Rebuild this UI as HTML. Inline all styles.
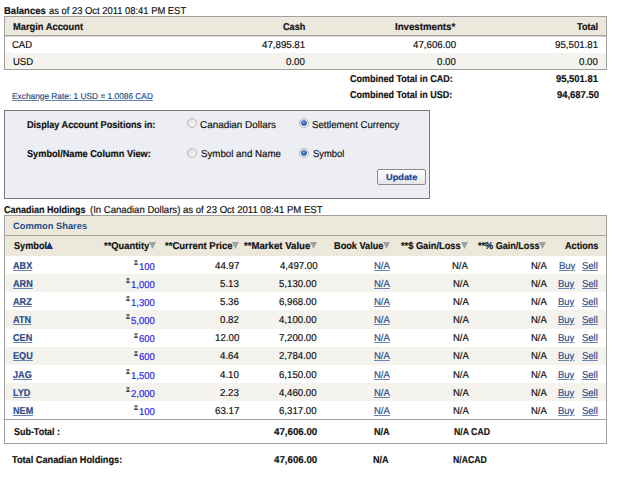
<!DOCTYPE html><html><head><meta charset="utf-8"><style>
html,body{margin:0;padding:0;background:#fff;}
body{width:619px;height:477px;position:relative;overflow:hidden;font-family:"Liberation Sans",sans-serif;font-size:10px;color:#111;text-rendering:geometricPrecision;}
.t{position:absolute;white-space:nowrap;line-height:11px;transform-origin:0 0;-webkit-text-stroke:0.18px currentColor;}
.u{text-decoration:underline;text-decoration-color:#6a84b0;}
.x{position:absolute;box-sizing:border-box;}
</style></head><body>
<div class="x" style="left:4px;top:16px;width:603px;height:19px;background:#ece9dc"></div>
<div class="x" style="left:4px;top:16px;width:603px;height:54px;border:1px solid #a0a0a0"></div>
<div class="x" style="left:5px;top:35px;width:601px;height:1px;background:#a4a49c"></div>
<div class="x" style="left:5px;top:36px;width:601px;height:1px;background:#d8d6cc"></div>
<div class="x" style="left:5px;top:53px;width:601px;height:16px;background:#f5f3ee"></div>
<div class="x" style="left:4px;top:110px;width:426px;height:89px;border:1px solid #7a7a7a;background:#eceef3"></div>
<svg width="0" height="0" style="position:absolute"><defs><linearGradient id="rg" x1="0" y1="0" x2="1" y2="1"><stop offset="0" stop-color="#d6d9de"/><stop offset="1" stop-color="#ffffff"/></linearGradient><radialGradient id="bg" cx="0.45" cy="0.4" r="0.6"><stop offset="0" stop-color="#7db4ec"/><stop offset="0.5" stop-color="#2f6cc0"/><stop offset="1" stop-color="#1c4690"/></radialGradient></defs></svg>
<svg class="x" style="left:187px;top:118px" width="10" height="10" viewBox="0 0 10 10"><circle cx="5" cy="5" r="4.5" fill="url(#rg)" stroke="#b4b4b4" stroke-width="1"/></svg>
<svg class="x" style="left:299px;top:118px" width="10" height="10" viewBox="0 0 10 10"><circle cx="5" cy="5" r="4.5" fill="url(#rg)" stroke="#b4b4b4" stroke-width="1"/><circle cx="5" cy="5" r="2.8" fill="url(#bg)"/></svg>
<svg class="x" style="left:187px;top:148px" width="10" height="10" viewBox="0 0 10 10"><circle cx="5" cy="5" r="4.5" fill="url(#rg)" stroke="#b4b4b4" stroke-width="1"/></svg>
<svg class="x" style="left:299px;top:148px" width="10" height="10" viewBox="0 0 10 10"><circle cx="5" cy="5" r="4.5" fill="url(#rg)" stroke="#b4b4b4" stroke-width="1"/><circle cx="5" cy="5" r="2.8" fill="url(#bg)"/></svg>
<div class="x" style="left:377px;top:169px;width:49px;height:16px;border:1px solid #8a8a8a;border-radius:2px;background:linear-gradient(#ffffff,#e6e6e6)"></div>
<div class="x" style="left:4px;top:215px;width:603px;height:41px;background:#ece9dc"></div>
<div class="x" style="left:4px;top:215px;width:603px;height:229px;border:1px solid #a0a0a0"></div>
<div class="x" style="left:5px;top:235px;width:601px;height:1px;background:#a8a8a0"></div>
<div class="x" style="left:5px;top:274px;width:601px;height:18px;background:#f5f3ee"></div>
<div class="x" style="left:5px;top:310px;width:601px;height:19px;background:#f5f3ee"></div>
<div class="x" style="left:5px;top:347px;width:601px;height:18px;background:#f5f3ee"></div>
<div class="x" style="left:5px;top:383px;width:601px;height:18px;background:#f5f3ee"></div>
<div class="x" style="left:5px;top:419px;width:601px;height:1px;background:#a0a0a0"></div>
<svg class="x" style="left:148.6px;top:242px" width="7" height="7" viewBox="0 0 7 7"><path d="M0 0H7L3.5 7Z" fill="#a0a0a0"/></svg>
<svg class="x" style="left:231.7px;top:242px" width="7" height="7" viewBox="0 0 7 7"><path d="M0 0H7L3.5 7Z" fill="#a0a0a0"/></svg>
<svg class="x" style="left:310px;top:242px" width="7" height="7" viewBox="0 0 7 7"><path d="M0 0H7L3.5 7Z" fill="#a0a0a0"/></svg>
<svg class="x" style="left:382.7px;top:242px" width="7" height="7" viewBox="0 0 7 7"><path d="M0 0H7L3.5 7Z" fill="#a0a0a0"/></svg>
<svg class="x" style="left:461.1px;top:242px" width="7" height="7" viewBox="0 0 7 7"><path d="M0 0H7L3.5 7Z" fill="#a0a0a0"/></svg>
<svg class="x" style="left:539.4px;top:242px" width="7" height="7" viewBox="0 0 7 7"><path d="M0 0H7L3.5 7Z" fill="#a0a0a0"/></svg>
<svg class="x" style="left:46px;top:242px" width="7" height="7" viewBox="0 0 7 7"><path d="M0 7H7L3.5 0Z" fill="#1c3a7e"/></svg>
<svg class="x" style="left:134.1px;top:260px" width="4" height="5" viewBox="0 0 4 5"><path d="M.4 .2H3.6V1.5H.4ZM.2 3.6H3.8V4.9H.2ZM1.55 1H2.45V4H1.55Z" fill="#444"/></svg>
<svg class="x" style="left:126.2px;top:278px" width="4" height="5" viewBox="0 0 4 5"><path d="M.4 .2H3.6V1.5H.4ZM.2 3.6H3.8V4.9H.2ZM1.55 1H2.45V4H1.55Z" fill="#444"/></svg>
<svg class="x" style="left:126.2px;top:296px" width="4" height="5" viewBox="0 0 4 5"><path d="M.4 .2H3.6V1.5H.4ZM.2 3.6H3.8V4.9H.2ZM1.55 1H2.45V4H1.55Z" fill="#444"/></svg>
<svg class="x" style="left:126.2px;top:314px" width="4" height="5" viewBox="0 0 4 5"><path d="M.4 .2H3.6V1.5H.4ZM.2 3.6H3.8V4.9H.2ZM1.55 1H2.45V4H1.55Z" fill="#444"/></svg>
<svg class="x" style="left:134.1px;top:333px" width="4" height="5" viewBox="0 0 4 5"><path d="M.4 .2H3.6V1.5H.4ZM.2 3.6H3.8V4.9H.2ZM1.55 1H2.45V4H1.55Z" fill="#444"/></svg>
<svg class="x" style="left:134.1px;top:351px" width="4" height="5" viewBox="0 0 4 5"><path d="M.4 .2H3.6V1.5H.4ZM.2 3.6H3.8V4.9H.2ZM1.55 1H2.45V4H1.55Z" fill="#444"/></svg>
<svg class="x" style="left:126.2px;top:369px" width="4" height="5" viewBox="0 0 4 5"><path d="M.4 .2H3.6V1.5H.4ZM.2 3.6H3.8V4.9H.2ZM1.55 1H2.45V4H1.55Z" fill="#444"/></svg>
<svg class="x" style="left:126.2px;top:387px" width="4" height="5" viewBox="0 0 4 5"><path d="M.4 .2H3.6V1.5H.4ZM.2 3.6H3.8V4.9H.2ZM1.55 1H2.45V4H1.55Z" fill="#444"/></svg>
<svg class="x" style="left:134.1px;top:405px" width="4" height="5" viewBox="0 0 4 5"><path d="M.4 .2H3.6V1.5H.4ZM.2 3.6H3.8V4.9H.2ZM1.55 1H2.45V4H1.55Z" fill="#444"/></svg>
<div class="t" style="left:4.25px;top:6px;transform:scaleX(0.9511);color:#111;font-weight:bold">Balances</div>
<div class="t" style="left:48.75px;top:6px;transform:scaleX(0.9391);color:#111">as of 23 Oct 2011 08:41 PM EST</div>
<div class="t" style="left:12.75px;top:22px;transform:scaleX(0.9312);color:#111;font-weight:bold">Margin Account</div>
<div class="t" style="left:283.25px;top:22px;transform:scaleX(0.91);color:#111;font-weight:bold">Cash</div>
<div class="t" style="left:395.25px;top:22px;transform:scaleX(0.9676);color:#111;font-weight:bold">Investments*</div>
<div class="t" style="left:577.25px;top:22px;transform:scaleX(0.91);color:#111;font-weight:bold">Total</div>
<div class="t" style="left:12.25px;top:40px;transform:scaleX(0.95);color:#111">CAD</div>
<div class="t" style="left:262.25px;top:40px;transform:scaleX(0.97);color:#111">47,895.81</div>
<div class="t" style="left:412.5px;top:40px;transform:scaleX(0.97);color:#111">47,606.00</div>
<div class="t" style="left:555.25px;top:40px;transform:scaleX(0.97);color:#111">95,501.81</div>
<div class="t" style="left:12.75px;top:57px;transform:scaleX(0.95);color:#111">USD</div>
<div class="t" style="left:286.25px;top:57px;transform:scaleX(0.97);color:#111">0.00</div>
<div class="t" style="left:436.5px;top:57px;transform:scaleX(0.97);color:#111">0.00</div>
<div class="t" style="left:579.25px;top:57px;transform:scaleX(0.97);color:#111">0.00</div>
<div class="t" style="left:350.0px;top:74px;transform:scaleX(0.8995);color:#111;font-weight:bold">Combined Total in CAD:</div>
<div class="t" style="left:556.0px;top:74px;transform:scaleX(0.9414);color:#111;font-weight:bold">95,501.81</div>
<div class="t" style="left:350.0px;top:90px;transform:scaleX(0.8995);color:#111;font-weight:bold">Combined Total in USD:</div>
<div class="t" style="left:556.5px;top:90px;transform:scaleX(0.9414);color:#111;font-weight:bold">94,687.50</div>
<div class="t u" style="left:12.25px;top:90.5px;transform:scaleX(0.9794);color:#2a4f86;font-size:8.5px">Exchange Rate: 1 USD = 1.0086 CAD</div>
<div class="t" style="left:27.0px;top:120px;transform:scaleX(0.9114);color:#111;font-weight:bold">Display Account Positions in:</div>
<div class="t" style="left:27.25px;top:149px;transform:scaleX(0.9175);color:#111;font-weight:bold">Symbol/Name Column View:</div>
<div class="t" style="left:200.0px;top:120px;transform:scaleX(0.9891);color:#111">Canadian Dollars</div>
<div class="t" style="left:312.25px;top:120px;transform:scaleX(0.9588);color:#111">Settlement Currency</div>
<div class="t" style="left:200.75px;top:149px;transform:scaleX(0.972);color:#111">Symbol and Name</div>
<div class="t" style="left:312.5px;top:149px;transform:scaleX(0.9385);color:#111">Symbol</div>
<div class="t" style="left:385.75px;top:171.5px;transform:scaleX(1.085);color:#1a3f8f;font-size:8.5px;font-weight:bold">Update</div>
<div class="t" style="left:4.25px;top:205px;transform:scaleX(0.9012);color:#111;font-weight:bold">Canadian Holdings</div>
<div class="t" style="left:90.0px;top:205px;transform:scaleX(0.9558);color:#111">(In Canadian Dollars) as of 23 Oct 2011 08:41 PM EST</div>
<div class="t" style="left:12.75px;top:220.5px;transform:scaleX(1.0149);color:#244c8a;font-size:9.2px;font-weight:bold;-webkit-text-stroke:0">Common Shares</div>
<div class="t" style="left:13.5px;top:241px;transform:scaleX(0.916);color:#111;font-weight:bold">Symbol</div>
<div class="t" style="left:103.5px;top:241px;transform:scaleX(0.935);color:#111;font-weight:bold">**Quantity</div>
<div class="t" style="left:164.5px;top:241px;transform:scaleX(0.9493);color:#111;font-weight:bold">**Current Price</div>
<div class="t" style="left:244.0px;top:241px;transform:scaleX(0.9621);color:#111;font-weight:bold">**Market Value</div>
<div class="t" style="left:333.5px;top:241px;transform:scaleX(0.9175);color:#111;font-weight:bold">Book Value</div>
<div class="t" style="left:401.0px;top:241px;transform:scaleX(0.9254);color:#111;font-weight:bold">**$ Gain/Loss</div>
<div class="t" style="left:477.75px;top:241px;transform:scaleX(0.9071);color:#111;font-weight:bold">**% Gain/Loss</div>
<div class="t" style="left:564.75px;top:241px;transform:scaleX(0.9104);color:#111;font-weight:bold">Actions</div>
<div class="t u" style="left:12.75px;top:261px;transform:scaleX(0.91);color:#2c4c88;font-weight:bold">ABX</div>
<div class="t" style="left:139.0px;top:262px;transform:scaleX(0.95);color:#2626e8">100</div>
<div class="t" style="left:215.0px;top:261px;transform:scaleX(0.97);color:#111">44.97</div>
<div class="t" style="left:279.75px;top:261px;transform:scaleX(0.9651);color:#111">4,497.00</div>
<div class="t u" style="left:374.0px;top:261px;transform:scaleX(0.95);color:#2c4c88">N/A</div>
<div class="t" style="left:452.25px;top:261px;transform:scaleX(0.95);color:#111">N/A</div>
<div class="t" style="left:530.5px;top:261px;transform:scaleX(0.95);color:#111">N/A</div>
<div class="t u" style="left:558.5px;top:261px;transform:scaleX(0.95);color:#2c4c88">Buy</div>
<div class="t u" style="left:582.0px;top:261px;transform:scaleX(0.95);color:#2c4c88">Sell</div>
<div class="t u" style="left:13.0px;top:279px;transform:scaleX(0.91);color:#2c4c88;font-weight:bold">ARN</div>
<div class="t" style="left:131.0px;top:280px;transform:scaleX(0.95);color:#2626e8">1,000</div>
<div class="t" style="left:220.0px;top:279px;transform:scaleX(0.97);color:#111">5.13</div>
<div class="t" style="left:279.0px;top:279px;transform:scaleX(0.9651);color:#111">5,130.00</div>
<div class="t u" style="left:374.0px;top:279px;transform:scaleX(0.95);color:#2c4c88">N/A</div>
<div class="t" style="left:452.5px;top:279px;transform:scaleX(0.95);color:#111">N/A</div>
<div class="t" style="left:530.5px;top:279px;transform:scaleX(0.95);color:#111">N/A</div>
<div class="t u" style="left:558.25px;top:279px;transform:scaleX(0.95);color:#2c4c88">Buy</div>
<div class="t u" style="left:581.75px;top:279px;transform:scaleX(0.95);color:#2c4c88">Sell</div>
<div class="t u" style="left:13.0px;top:297px;transform:scaleX(0.91);color:#2c4c88;font-weight:bold">ARZ</div>
<div class="t" style="left:131.0px;top:298px;transform:scaleX(0.95);color:#2626e8">1,300</div>
<div class="t" style="left:220.0px;top:297px;transform:scaleX(0.97);color:#111">5.36</div>
<div class="t" style="left:279.0px;top:297px;transform:scaleX(0.9651);color:#111">6,968.00</div>
<div class="t u" style="left:374.0px;top:297px;transform:scaleX(0.95);color:#2c4c88">N/A</div>
<div class="t" style="left:452.5px;top:297px;transform:scaleX(0.95);color:#111">N/A</div>
<div class="t" style="left:530.5px;top:297px;transform:scaleX(0.95);color:#111">N/A</div>
<div class="t u" style="left:558.25px;top:297px;transform:scaleX(0.95);color:#2c4c88">Buy</div>
<div class="t u" style="left:581.75px;top:297px;transform:scaleX(0.95);color:#2c4c88">Sell</div>
<div class="t u" style="left:13.0px;top:315px;transform:scaleX(0.91);color:#2c4c88;font-weight:bold">ATN</div>
<div class="t" style="left:131.0px;top:316px;transform:scaleX(0.95);color:#2626e8">5,000</div>
<div class="t" style="left:220.0px;top:315px;transform:scaleX(0.97);color:#111">0.82</div>
<div class="t" style="left:279.0px;top:315px;transform:scaleX(0.9651);color:#111">4,100.00</div>
<div class="t u" style="left:374.0px;top:315px;transform:scaleX(0.95);color:#2c4c88">N/A</div>
<div class="t" style="left:452.5px;top:315px;transform:scaleX(0.95);color:#111">N/A</div>
<div class="t" style="left:530.5px;top:315px;transform:scaleX(0.95);color:#111">N/A</div>
<div class="t u" style="left:558.25px;top:315px;transform:scaleX(0.95);color:#2c4c88">Buy</div>
<div class="t u" style="left:581.75px;top:315px;transform:scaleX(0.95);color:#2c4c88">Sell</div>
<div class="t u" style="left:13.0px;top:333px;transform:scaleX(0.91);color:#2c4c88;font-weight:bold">CEN</div>
<div class="t" style="left:139.0px;top:334px;transform:scaleX(0.95);color:#2626e8">600</div>
<div class="t" style="left:215.0px;top:333px;transform:scaleX(0.97);color:#111">12.00</div>
<div class="t" style="left:279.0px;top:333px;transform:scaleX(0.9651);color:#111">7,200.00</div>
<div class="t u" style="left:374.0px;top:333px;transform:scaleX(0.95);color:#2c4c88">N/A</div>
<div class="t" style="left:452.5px;top:333px;transform:scaleX(0.95);color:#111">N/A</div>
<div class="t" style="left:530.5px;top:333px;transform:scaleX(0.95);color:#111">N/A</div>
<div class="t u" style="left:558.25px;top:333px;transform:scaleX(0.95);color:#2c4c88">Buy</div>
<div class="t u" style="left:581.75px;top:333px;transform:scaleX(0.95);color:#2c4c88">Sell</div>
<div class="t u" style="left:13.0px;top:351px;transform:scaleX(0.91);color:#2c4c88;font-weight:bold">EQU</div>
<div class="t" style="left:139.0px;top:352px;transform:scaleX(0.95);color:#2626e8">600</div>
<div class="t" style="left:220.0px;top:351px;transform:scaleX(0.97);color:#111">4.64</div>
<div class="t" style="left:279.0px;top:351px;transform:scaleX(0.9651);color:#111">2,784.00</div>
<div class="t u" style="left:374.0px;top:351px;transform:scaleX(0.95);color:#2c4c88">N/A</div>
<div class="t" style="left:452.5px;top:351px;transform:scaleX(0.95);color:#111">N/A</div>
<div class="t" style="left:530.5px;top:351px;transform:scaleX(0.95);color:#111">N/A</div>
<div class="t u" style="left:558.25px;top:351px;transform:scaleX(0.95);color:#2c4c88">Buy</div>
<div class="t u" style="left:581.75px;top:351px;transform:scaleX(0.95);color:#2c4c88">Sell</div>
<div class="t u" style="left:13.0px;top:370px;transform:scaleX(0.91);color:#2c4c88;font-weight:bold">JAG</div>
<div class="t" style="left:131.0px;top:371px;transform:scaleX(0.95);color:#2626e8">1,500</div>
<div class="t" style="left:220.0px;top:370px;transform:scaleX(0.97);color:#111">4.10</div>
<div class="t" style="left:279.0px;top:370px;transform:scaleX(0.9651);color:#111">6,150.00</div>
<div class="t u" style="left:374.0px;top:370px;transform:scaleX(0.95);color:#2c4c88">N/A</div>
<div class="t" style="left:452.5px;top:370px;transform:scaleX(0.95);color:#111">N/A</div>
<div class="t" style="left:530.5px;top:370px;transform:scaleX(0.95);color:#111">N/A</div>
<div class="t u" style="left:558.25px;top:370px;transform:scaleX(0.95);color:#2c4c88">Buy</div>
<div class="t u" style="left:581.75px;top:370px;transform:scaleX(0.95);color:#2c4c88">Sell</div>
<div class="t u" style="left:13.0px;top:388px;transform:scaleX(0.91);color:#2c4c88;font-weight:bold">LYD</div>
<div class="t" style="left:131.0px;top:389px;transform:scaleX(0.95);color:#2626e8">2,000</div>
<div class="t" style="left:220.0px;top:388px;transform:scaleX(0.97);color:#111">2.23</div>
<div class="t" style="left:279.0px;top:388px;transform:scaleX(0.9651);color:#111">4,460.00</div>
<div class="t u" style="left:374.0px;top:388px;transform:scaleX(0.95);color:#2c4c88">N/A</div>
<div class="t" style="left:452.5px;top:388px;transform:scaleX(0.95);color:#111">N/A</div>
<div class="t" style="left:530.5px;top:388px;transform:scaleX(0.95);color:#111">N/A</div>
<div class="t u" style="left:558.25px;top:388px;transform:scaleX(0.95);color:#2c4c88">Buy</div>
<div class="t u" style="left:581.75px;top:388px;transform:scaleX(0.95);color:#2c4c88">Sell</div>
<div class="t u" style="left:13.0px;top:406px;transform:scaleX(0.91);color:#2c4c88;font-weight:bold">NEM</div>
<div class="t" style="left:139.0px;top:407px;transform:scaleX(0.95);color:#2626e8">100</div>
<div class="t" style="left:215.0px;top:406px;transform:scaleX(0.97);color:#111">63.17</div>
<div class="t" style="left:279.0px;top:406px;transform:scaleX(0.9651);color:#111">6,317.00</div>
<div class="t u" style="left:374.0px;top:406px;transform:scaleX(0.95);color:#2c4c88">N/A</div>
<div class="t" style="left:452.5px;top:406px;transform:scaleX(0.95);color:#111">N/A</div>
<div class="t" style="left:530.5px;top:406px;transform:scaleX(0.95);color:#111">N/A</div>
<div class="t u" style="left:558.25px;top:406px;transform:scaleX(0.95);color:#2c4c88">Buy</div>
<div class="t u" style="left:581.75px;top:406px;transform:scaleX(0.95);color:#2c4c88">Sell</div>
<div class="t" style="left:14.0px;top:427px;transform:scaleX(0.8943);color:#111;font-weight:bold">Sub-Total :</div>
<div class="t" style="left:273.75px;top:427px;transform:scaleX(0.9729);color:#111;font-weight:bold">47,606.00</div>
<div class="t" style="left:374.25px;top:427px;transform:scaleX(0.91);color:#111;font-weight:bold">N/A</div>
<div class="t" style="left:453.5px;top:427px;transform:scaleX(0.8717);color:#111;font-weight:bold">N/A CAD</div>
<div class="t" style="left:11.75px;top:455px;transform:scaleX(0.9201);color:#111;font-weight:bold">Total Canadian Holdings:</div>
<div class="t" style="left:274.25px;top:455px;transform:scaleX(0.9729);color:#111;font-weight:bold">47,606.00</div>
<div class="t" style="left:373.25px;top:455px;transform:scaleX(0.91);color:#111;font-weight:bold">N/A</div>
<div class="t" style="left:452.75px;top:455px;transform:scaleX(0.8687);color:#111;font-weight:bold">N/ACAD</div>
</body></html>
